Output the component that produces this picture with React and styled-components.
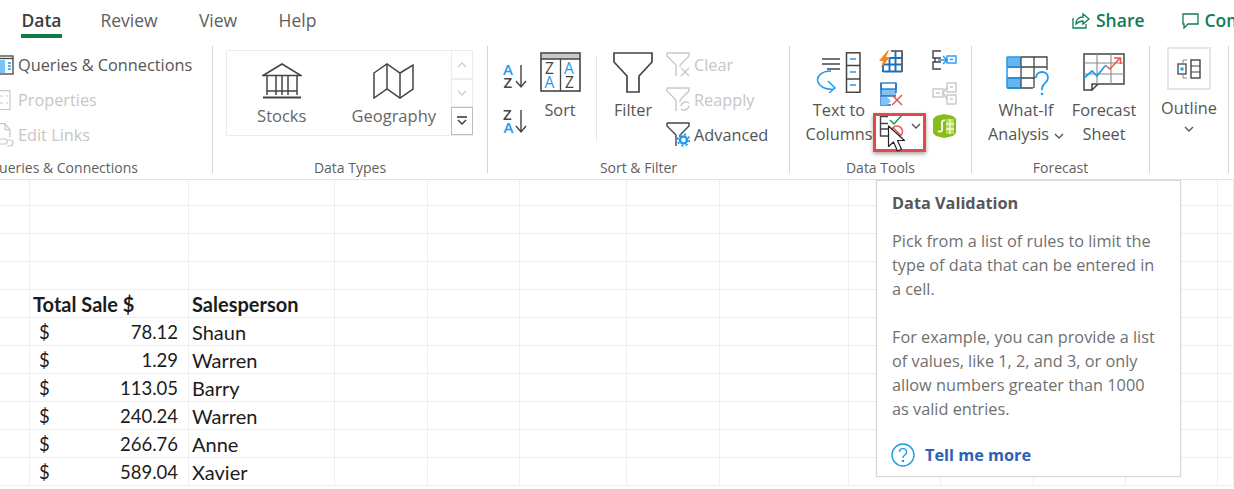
import React from "react";
import styled, { createGlobalStyle } from "styled-components";

const Global = createGlobalStyle`
  html, body { margin: 0; padding: 0; background: #fff; }
  body { font-family: "Open Sans", "Noto Sans", sans-serif; color: #555; }
  * { box-sizing: border-box; }
`;

const Page = styled.div`
  position: relative;
  width: 1234px;
  height: 489px;
  overflow: hidden;
  background: #fff;
`;

const TabBar = styled.div`
  display: flex;
  align-items: flex-start;
  height: 46px;
  padding-left: 21px;
`;

const Tab = styled.div`
  height: 38px;
  width: ${(p) => p.$w}px;
  margin-right: ${(p) => p.$gap}px;
  padding-top: 8px;
  font-size: 17.5px;
  line-height: 24px;
  text-align: center;
  white-space: nowrap;
  color: ${(p) => (p.$active ? "#3d3d3d" : "#5e5e5e")};
  font-weight: ${(p) => (p.$active ? 600 : 400)};
  border-bottom: ${(p) => (p.$active ? "4px solid #107c41" : "none")};
`;

const TabActions = styled.div`
  display: flex;
  margin-left: auto;
  width: 162px;
  height: 40px;
  padding-top: 8px;
  overflow: hidden;
`;

const TabAction = styled.div`
  display: flex;
  align-items: center;
  gap: 6px;
  flex: none;
  height: 24px;
  margin-right: 37px;
  font-size: 17.5px;
  font-weight: 600;
  color: #0f7b5a;
  white-space: nowrap;
`;

const Ribbon = styled.div`
  display: flex;
  height: 134px;
  border-bottom: 1px solid #e4e4e4;
`;

const Group = styled.div`
  display: flex;
  flex-direction: column;
  flex: none;
  width: ${(p) => p.$w}px;
  height: 127px;
  border-right: 1px solid #d4d4d4;
`;

const GroupBody = styled.div`
  display: flex;
  flex: none;
  height: 111px;
  padding-left: ${(p) => p.$pad || 0}px;
`;

const GroupLabel = styled.div`
  display: flex;
  justify-content: ${(p) => (p.$end ? "flex-end" : "center")};
  height: 16px;
  padding-right: ${(p) => p.$right || 0}px;
  font-size: 14px;
  line-height: 22px;
  white-space: nowrap;
  color: #5f5f5f;
`;

const RowStack = styled.div`
  display: flex;
  flex-direction: column;
  margin-left: ${(p) => p.$ml || 0}px;
  padding-top: 1px;
`;

const SmallRow = styled.div`
  display: flex;
  align-items: center;
  gap: 4px;
  height: 35px;
  font-size: 16.3px;
  white-space: nowrap;
  color: ${(p) => (p.$off ? "#c6c6c6" : "#555")};
`;

const RowIcon = styled.div`
  display: flex;
  flex: none;
  width: ${(p) => p.$w}px;
`;

const Gallery = styled.div`
  display: flex;
  width: 247px;
  height: 86px;
  margin: 4px 0 0 0;
  border: 1px solid #ececec;
`;

const GalleryItem = styled.div`
  display: flex;
  flex-direction: column;
  align-items: center;
  width: ${(p) => p.$w}px;
  padding-top: 12px;
  font-size: 16.5px;
  color: #666;
`;

const GalleryLabel = styled.div`
  margin-top: 5px;
  line-height: 24px;
`;

const GalleryScroll = styled.div`
  display: flex;
  flex-direction: column;
  flex: none;
  width: 22px;
  margin-left: auto;
  margin-top: -1px;
  margin-right: -1px;
`;

const ScrollButton = styled.div`
  display: flex;
  align-items: center;
  justify-content: center;
  height: ${(p) => p.$h}px;
  border: 1px solid ${(p) => (p.$on ? "#bdbdbd" : "#ececec")};
`;

const BigButton = styled.div`
  display: flex;
  flex-direction: column;
  align-items: center;
  flex: none;
  width: ${(p) => p.$w}px;
  margin-left: ${(p) => p.$ml || 0}px;
  padding-top: 6px;
  font-size: 16.3px;
  line-height: 24px;
  text-align: center;
  white-space: nowrap;
  color: #555;
`;

const BigIcon = styled.div`
  display: flex;
  align-items: center;
  justify-content: center;
  height: 40px;
  margin-bottom: 6px;
`;

const SortPair = styled.div`
  display: flex;
  flex-direction: column;
  flex: none;
  gap: 20px;
  width: 24px;
  padding-top: 18px;
`;

const VRule = styled.div`
  flex: none;
  width: 1px;
  height: 86px;
  margin: 9px 0 0 11px;
  background: #e4e4e4;
`;

const ToolColumn = styled.div`
  display: flex;
  flex-direction: column;
  flex: none;
  width: ${(p) => p.$w}px;
  padding: 4px 0 0 ${(p) => p.$pad || 0}px;
`;

const ToolCell = styled.div`
  position: relative;
  display: flex;
  align-items: flex-start;
  height: 32px;
`;

const RedBox = styled.div`
  position: absolute;
  left: -6px;
  top: -1px;
  width: 53px;
  height: 39px;
  border: 3px solid #e9464c;
  box-shadow: 0 2px 4px rgba(0, 0, 0, 0.35);
`;

const Pointer = styled.div`
  position: absolute;
  left: 8px;
  top: 11px;
  display: flex;
`;

const OutlineBox = styled.div`
  display: flex;
  align-items: center;
  justify-content: center;
  width: 44px;
  height: 43px;
  margin: 1px 0 6px 0;
  border: 2px solid #e6e6e6;
`;

const OutlineButton = styled.div`
  display: flex;
  flex-direction: column;
  align-items: center;
  width: 78px;
  font-size: 16.3px;
  line-height: 24px;
  color: #555;
`;

const Chevron = styled.span`
  display: inline-flex;
  margin-left: ${(p) => p.$ml || 0}px;
  margin-top: ${(p) => p.$mt || 0}px;
  vertical-align: middle;
`;

const Sheet = styled.div`
  display: grid;
  grid-template-columns: 30px 159px 146px 93px 92px 107px 93px 129px 92px 93px 92px 92px 16px;
  grid-auto-rows: 28px;
  grid-template-rows: 26px;
  font-family: "Lato", "Open Sans", sans-serif;
  font-size: 20px;
  color: #1c1c1c;
`;

const Cell = styled.div`
  display: flex;
  align-items: center;
  justify-content: ${(p) => (p.$money ? "space-between" : "flex-start")};
  padding: ${(p) => (p.$money ? "0 10px 0 9px" : "0 0 0 3px")};
  border-right: 1px solid #eeeeee;
  border-bottom: 1px solid #eeeeee;
  font-weight: ${(p) => (p.$bold ? 700 : 400)};
  white-space: nowrap;
`;

const Amount = styled.span`
  font-size: 18.500px;
`;

const Tooltip = styled.div`
  position: absolute;
  left: 876px;
  top: 180px;
  width: 305px;
  height: 297px;
  padding: 10px 15px 0 15px;
  background: #fff;
  border: 1px solid #d6d6d6;
  box-shadow: 0 0 2px rgba(0, 0, 0, 0.08);
  color: #707070;
`;

const TipTitle = styled.div`
  font-size: 16.300px;
  font-weight: 700;
  line-height: 24px;
  white-space: nowrap;
  color: #575757;
`;

const TipText = styled.p`
  margin: ${(p) => p.$mt}px 0 0 0;
  font-size: 16.300px;
  line-height: 24px;
  white-space: nowrap;
`;

const TipLink = styled.div`
  display: flex;
  align-items: center;
  gap: 10px;
  margin-top: 22px;
  margin-left: -1px;
  font-size: 16.300px;
  font-weight: 700;
  color: #2b62b8;
`;

const DARK = "#444";
const BLUE = "#1e9bf0";
const OFF = "#c8c8c8";

const ChevronIcon = ({ color = "#555", size = 10 }) => (
  <svg width={size} height={size * 0.6} viewBox="0 0 10 6" fill="none" stroke={color} strokeWidth="1.4">
    <path d="M1 1l4 4 4-4" />
  </svg>
);

const ShareIcon = () => (
  <svg width="18" height="18" viewBox="0 0 18 18" fill="none" stroke="#0f7b5a" strokeWidth="1.3">
    <path d="M1 7v10h13v-4" />
    <path d="M4 13c0-5 3-7 7-7V3l6 5-6 5v-3c-3 0-5 1-7 3z" />
  </svg>
);

const CommentIcon = () => (
  <svg width="17" height="17" viewBox="0 0 17 17" fill="none" stroke="#0f7b5a" strokeWidth="1.3">
    <path d="M1 2h15v10H6l-4 4v-4H1z" />
  </svg>
);

const QueriesIcon = () => (
  <svg width="14" height="20" viewBox="0 0 14 20" fill="none">
    <rect x="-4" y="1" width="17" height="18" stroke={DARK} strokeWidth="1.3" />
    <path d="M-4 3.5h17" stroke={DARK} strokeWidth="1.3" />
    <rect x="0" y="5" width="5" height="13" fill="#79c4f5" />
    <path d="M8 8h3M8 11h3M8 14h3" stroke={BLUE} strokeWidth="1.3" />
  </svg>
);

const PropertiesIcon = () => (
  <svg width="12" height="20" viewBox="0 0 12 20" fill="none" stroke={OFF} strokeWidth="1.2">
    <path d="M0 .6h10v19H0" />
    <path d="M0 6h3M0 13h3M6 6h2M6 13h2" />
  </svg>
);

const EditLinksIcon = () => (
  <svg width="14" height="24" viewBox="0 0 14 24" fill="none" stroke={OFF} strokeWidth="1.2">
    <path d="M0 .6h5l5 6v8M5 .6v6h5" />
    <path d="M0 16h5c3 0 3 5 0 5H0M7 23h3c4 0 4-6 0-6H7" />
  </svg>
);

const StocksIcon = () => (
  <svg width="40" height="36" viewBox="0 0 40 36" fill="none" stroke={DARK} strokeWidth="1.5">
    <path d="M1 12.5L20 1l19 11.500z" />
    <path d="M5 13v19M35 13v19M14 13v19M20 13v19M26 13v19M5 28h30" />
    <path d="M1 34.500h38" strokeWidth="2.200" />
  </svg>
);

const MapIcon = () => (
  <svg width="41" height="36" viewBox="0 0 41 36" fill="none" stroke={DARK} strokeWidth="1.5">
    <path d="M1 10L14 1l13 9 13-8v24l-13 9-13-9-13 9z" />
    <path d="M14 1v25M27 10v25" />
  </svg>
);

const SortSmall = ({ top, bottom }) => (
  <svg width="24" height="25" viewBox="0 0 24 25" fill="none" fontFamily="Open Sans, sans-serif" fontSize="15" fontWeight="600" overflow="visible">
    <text x="0" y="11" fill={top === "A" ? BLUE : DARK}>{top}</text>
    <text x="0.500" y="24" fill={bottom === "A" ? BLUE : DARK}>{bottom}</text>
    <path d="M18 1v22M13 17l5 6 5-6" stroke={DARK} strokeWidth="1.400" />
  </svg>
);

const SortBigIcon = () => (
  <svg width="41" height="40" viewBox="0 0 41 40" fill="none" fontFamily="Open Sans, sans-serif" fontSize="15.500">
    <rect x="1" y="1" width="39" height="38" stroke={DARK} strokeWidth="1.600" />
    <rect x="2" y="2" width="37" height="5" fill="#c9c9c9" />
    <path d="M1 7h39M20.500 7v32" stroke={DARK} strokeWidth="1.300" />
    <text x="5" y="22" fill={DARK}>Z</text>
    <text x="4.500" y="36" fill={BLUE}>A</text>
    <text x="24" y="22" fill={BLUE}>A</text>
    <text x="25" y="36" fill={DARK}>Z</text>
  </svg>
);

const FilterIcon = () => (
  <svg width="40" height="41" viewBox="0 0 40 41" fill="none" stroke={DARK} strokeWidth="1.700">
    <path d="M1 1h38v9L26 24v16H14V24L1 10z" />
  </svg>
);

const FunnelSmall = ({ color, children }) => (
  <svg width="24" height="25" viewBox="0 0 24 25" fill="none" stroke={color} strokeWidth="1.400">
    <path d="M1 1h22v3l-9 9M10 13L1 4V1M10 13v11M14 13v2" />
    {children}
  </svg>
);

const TextColumnsIcon = () => (
  <svg width="46" height="41" viewBox="0 0 46 41" fill="none">
    <path d="M6 7h18M6 12h18M11 17h13" stroke={DARK} strokeWidth="1.300" />
    <rect x="30.500" y="0.800" width="13.500" height="39.500" stroke={DARK} strokeWidth="1.500" />
    <path d="M30.500 13.500h13.500M30.500 27h13.500" stroke={DARK} strokeWidth="1.300" />
    <path d="M34 7h6M34 20h6M34 33h6" stroke={BLUE} strokeWidth="1.500" />
    <path d="M15 19C5 19 0 25 2 30c2 5 8 8 16 7M12 29l7 7-6 5" stroke={BLUE} strokeWidth="1.500" />
  </svg>
);

const FlashFillIcon = () => (
  <svg width="24" height="23" viewBox="0 0 24 23" fill="none">
    <path d="M12 1h11v21" stroke={DARK} strokeWidth="1.600" />
    <path d="M4 14.500h19M4 21.500h19M4 14v8M10.500 8v14M16.500 1v21M10.500 8h13" stroke="#1b6fc2" strokeWidth="1.900" />
    <path d="M9 0L0 11h4l-2 7 9-11H7l3-7z" fill="#f5871f" />
  </svg>
);

const RemoveDupIcon = () => (
  <svg width="24" height="25" viewBox="0 0 24 25" fill="none">
    <rect x="2" y="7" width="15" height="7" fill="#7cc4f5" />
    <rect x="2" y="1" width="15" height="6" fill="#fff" stroke="#1b6fc2" strokeWidth="1.300" />
    <path d="M2 1v22h10M17 1v10M2 14h15" stroke="#1b6fc2" strokeWidth="1.400" />
    <path d="M2 15h6l4 4-4 4H2z" fill="#7cc4f5" />
    <path d="M13 13l10 10M23 13L13 23" stroke="#e8574f" strokeWidth="1.500" />
  </svg>
);

const ValidationIcon = () => (
  <svg width="25" height="24" viewBox="0 0 25 24" fill="none">
    <path d="M9 2.500H1.500v7H9M9 15H1.500v7H9" stroke={DARK} strokeWidth="1.400" />
    <path d="M1.500 9.500v5.500" stroke={DARK} strokeWidth="1.400" />
    <path d="M11 6l4 4 8-9" stroke="#1f9d55" strokeWidth="1.500" />
    <circle cx="18" cy="17.500" r="5.500" stroke="#e8574f" strokeWidth="1.500" />
    <path d="M14 13.500l8 8" stroke="#e8574f" strokeWidth="1.500" />
  </svg>
);

const PointerIcon = () => (
  <svg width="20" height="28" viewBox="0 0 20 28" fill="none">
    <path d="M1.500 1v20.500l5-4.500 4 9 4-1.800-4-8.700h7z" fill="#fff" stroke="#222" strokeWidth="1.200" strokeLinejoin="round" />
  </svg>
);

const RelationIcon = () => (
  <svg width="25" height="20" viewBox="0 0 25 20" fill="none">
    <path d="M9 1H1v7h8M9 12H1v7h8M3 8v4" stroke={DARK} strokeWidth="1.400" />
    <path d="M6 10h9M11 6l4 4-4 4" stroke={BLUE} strokeWidth="1.500" />
    <rect x="15" y="6" width="9" height="7" stroke={BLUE} strokeWidth="1.400" />
    <path d="M18 9.500h3" stroke={BLUE} strokeWidth="1.400" />
  </svg>
);

const HierarchyIcon = () => (
  <svg width="25" height="23" viewBox="0 0 25 23" fill="none" stroke={OFF} strokeWidth="1.400">
    <rect x="1" y="7" width="10" height="8" />
    <rect x="15" y="1" width="9" height="9" />
    <rect x="15" y="13" width="9" height="9" />
    <path d="M11 11l4-6M11 11l4 6M18 5h3M18 17h3M4 11h4" />
  </svg>
);

const DataModelIcon = () => (
  <svg width="25" height="24" viewBox="0 0 25 24" fill="none">
    <path d="M1 5l3-3 8-2 9 2 3 3v14l-3 3-9 2-8-2-3-3z" fill="#86bd1c" />
    <path d="M14 5h8v15h-8z" fill="#b8dc5c" />
    <path d="M14 10h8M14 15h8M18 5v15" stroke="#f2f8dc" strokeWidth="1.300" />
    <path d="M10 7v9c0 2-3 2-4 1M10 7l3-1" stroke="#fff" strokeWidth="1.700" />
  </svg>
);

const WhatIfIcon = () => (
  <svg width="46" height="40" viewBox="0 0 46 40" fill="none" overflow="visible">
    <rect x="4" y="5" width="14" height="10" fill="#62b6f2" />
    <rect x="4" y="26" width="14" height="10" fill="#62b6f2" />
    <path d="M18 5h26v13M4 15h40M4 26h28M4 36h26M18 5v31M31 5v31" stroke={DARK} strokeWidth="1.300" />
    <path d="M4 5v31M4 5h14M4 15h14M4 26h14M4 36h14" stroke={BLUE} strokeWidth="1.500" />
    <path d="M33 26c0-8 12-8 12 0 0 5-6 5-6 11v1" stroke={BLUE} strokeWidth="1.800" />
    <circle cx="39" cy="42" r="1.300" fill={BLUE} />
  </svg>
);

const ForecastIcon = () => (
  <svg width="42" height="38" viewBox="0 0 42 38" fill="none">
    <path d="M9 37H1V1h40v30H15l-6 6v-6h6" stroke={DARK} strokeWidth="1.500" />
    <path d="M1 10h40M1 21h40M14 1v30M28 1v30" stroke="#8a8a8a" strokeWidth="1.100" />
    <path d="M1 25l8-7 5 5 8-10" stroke={BLUE} strokeWidth="1.700" />
    <path d="M22 12l5 4 10-11M31 5h6.500v6" stroke="#e8574f" strokeWidth="1.600" />
  </svg>
);

const OutlineIcon = () => (
  <svg width="24" height="20" viewBox="0 0 24 20" fill="none">
    <path d="M6 1h4M6 19h4M6 1v3M6 16v3" stroke="#8a8a8a" strokeWidth="1" />
    <rect x="1" y="5" width="8" height="10" stroke={DARK} strokeWidth="1.300" />
    <rect x="3.500" y="8.500" width="3" height="3" fill={BLUE} />
    <rect x="14" y="1" width="9" height="18" stroke={DARK} strokeWidth="1.400" />
    <path d="M14 7h9M14 13h9" stroke={DARK} strokeWidth="1.200" />
  </svg>
);

const HelpIcon = () => (
  <svg width="24" height="24" viewBox="0 0 24 24" fill="none" stroke="#1e9be8" strokeWidth="1.400">
    <circle cx="12" cy="12" r="11" />
    <path d="M8.500 9c0-4.500 7-4.500 7 0 0 3-3.500 3-3.500 6" />
    <circle cx="12" cy="18" r=".6" fill="#1e9be8" />
  </svg>
);

const records = [
  ["78.12", "Shaun"],
  ["1.29", "Warren"],
  ["113.05", "Barry"],
  ["240.24", "Warren"],
  ["266.76", "Anne"],
  ["589.04", "Xavier"],
];

const COLUMN_COUNT = 13;
const ROW_COUNT = 11;

const SheetGrid = () => {
  const cells = [];
  for (let r = 0; r < ROW_COUNT; r++) {
    for (let c = 0; c < COLUMN_COUNT; c++) {
      const key = `${r}-${c}`;
      const rec = records[r - 5];
      if (r === 4 && c === 1) cells.push(<Cell key={key} $bold>Total Sale $</Cell>);
      else if (r === 4 && c === 2) cells.push(<Cell key={key} $bold>Salesperson</Cell>);
      else if (rec && c === 1) cells.push(<Cell key={key} $money><Amount>$</Amount><Amount>{rec[0]}</Amount></Cell>);
      else if (rec && c === 2) cells.push(<Cell key={key}>{rec[1]}</Cell>);
      else cells.push(<Cell key={key} />);
    }
  }
  return <Sheet>{cells}</Sheet>;
};

export default function App() {
  return (
    <Page>
      <Global />
      <TabBar>
        <Tab $w={41} $gap={38} $active>Data</Tab>
        <Tab $w={58} $gap={40}>Review</Tab>
        <Tab $w={40} $gap={40}>View</Tab>
        <Tab $w={39} $gap={0}>Help</Tab>
        <TabActions>
          <TabAction><ShareIcon />Share</TabAction>
          <TabAction><CommentIcon />Comments</TabAction>
        </TabActions>
      </TabBar>

      <Ribbon>
        <Group $w={213}>
          <GroupBody>
            <RowStack>
              <SmallRow><RowIcon $w={14}><QueriesIcon /></RowIcon>Queries &amp; Connections</SmallRow>
              <SmallRow $off><RowIcon $w={14}><PropertiesIcon /></RowIcon>Properties</SmallRow>
              <SmallRow $off><RowIcon $w={14}><EditLinksIcon /></RowIcon>Edit Links</SmallRow>
            </RowStack>
          </GroupBody>
          <GroupLabel $end $right={74}>Queries &amp; Connections</GroupLabel>
        </Group>

        <Group $w={275}>
          <GroupBody $pad={13}>
            <Gallery>
              <GalleryItem $w={110}>
                <StocksIcon />
                <GalleryLabel>Stocks</GalleryLabel>
              </GalleryItem>
              <GalleryItem $w={115}>
                <MapIcon />
                <GalleryLabel>Geography</GalleryLabel>
              </GalleryItem>
              <GalleryScroll>
                <ScrollButton $h={30}>
                  <svg width="10" height="6" viewBox="0 0 10 6" fill="none" stroke="#cfcfcf" strokeWidth="1.300"><path d="M1 5l4-4 4 4" /></svg>
                </ScrollButton>
                <ScrollButton $h={28}><ChevronIcon color="#cfcfcf" /></ScrollButton>
                <ScrollButton $h={29} $on>
                  <svg width="12" height="10" viewBox="0 0 12 10" fill="none" stroke="#333" strokeWidth="1.300"><path d="M1 1h10M2 4l4 4 4-4" /></svg>
                </ScrollButton>
              </GalleryScroll>
            </Gallery>
          </GroupBody>
          <GroupLabel>Data Types</GroupLabel>
        </Group>

        <Group $w={302}>
          <GroupBody $pad={15}>
            <SortPair>
              <SortSmall top="A" bottom="Z" />
              <SortSmall top="Z" bottom="A" />
            </SortPair>
            <BigButton $w={50} $ml={8}>
              <BigIcon><SortBigIcon /></BigIcon>
              Sort
            </BigButton>
            <VRule />
            <BigButton $w={60} $ml={6}>
              <BigIcon><FilterIcon /></BigIcon>
              Filter
            </BigButton>
            <RowStack $ml={3}>
              <SmallRow $off>
                <RowIcon $w={24}>
                  <FunnelSmall color={OFF}><path d="M15 16l8 8M23 16l-8 8" /></FunnelSmall>
                </RowIcon>
                Clear
              </SmallRow>
              <SmallRow $off>
                <RowIcon $w={24}>
                  <FunnelSmall color={OFF}><path d="M15 19a5 5 0 0 1 8-3M23 19a5 5 0 0 1-8 3" /></FunnelSmall>
                </RowIcon>
                Reapply
              </SmallRow>
              <SmallRow>
                <RowIcon $w={24}>
                  <FunnelSmall color={DARK}>
                    <circle cx="17.500" cy="18" r="3.500" stroke={BLUE} strokeWidth="2.500" />
                    <circle cx="17.500" cy="18" r="5.800" stroke={BLUE} strokeWidth="1.800" strokeDasharray="2 2.550" />
                  </FunnelSmall>
                </RowIcon>
                Advanced
              </SmallRow>
            </RowStack>
          </GroupBody>
          <GroupLabel>Sort &amp; Filter</GroupLabel>
        </Group>

        <Group $w={182}>
          <GroupBody $pad={15}>
            <BigButton $w={68}>
              <BigIcon><TextColumnsIcon /></BigIcon>
              Text to
              <br />
              Columns
            </BigButton>
            <ToolColumn $w={59} $pad={6}>
              <ToolCell><FlashFillIcon /></ToolCell>
              <ToolCell><RemoveDupIcon /></ToolCell>
              <ToolCell>
                <ValidationIcon />
                <Chevron $ml={7} $mt={9}><ChevronIcon /></Chevron>
                <RedBox />
                <Pointer><PointerIcon /></Pointer>
              </ToolCell>
            </ToolColumn>
            <ToolColumn $w={30}>
              <ToolCell><RelationIcon /></ToolCell>
              <ToolCell><HierarchyIcon /></ToolCell>
              <ToolCell><DataModelIcon /></ToolCell>
            </ToolColumn>
          </GroupBody>
          <GroupLabel>Data Tools</GroupLabel>
        </Group>

        <Group $w={178}>
          <GroupBody $pad={9}>
            <BigButton $w={90}>
              <BigIcon><WhatIfIcon /></BigIcon>
              What-If
              <br />
              <span>Analysis<Chevron $ml={5}><ChevronIcon /></Chevron></span>
            </BigButton>
            <BigButton $w={66}>
              <BigIcon><ForecastIcon /></BigIcon>
              Forecast
              <br />
              Sheet
            </BigButton>
          </GroupBody>
          <GroupLabel>Forecast</GroupLabel>
        </Group>

        <Group $w={79}>
          <GroupBody>
            <OutlineButton>
              <OutlineBox><OutlineIcon /></OutlineBox>
              Outline
              <Chevron $mt={6}><ChevronIcon /></Chevron>
            </OutlineButton>
          </GroupBody>
        </Group>
      </Ribbon>

      <SheetGrid />

      <Tooltip>
        <TipTitle>Data Validation</TipTitle>
        <TipText $mt={14}>
          Pick from a list of rules to limit the
          <br />type of data that can be entered in
          <br />a cell.
        </TipText>
        <TipText $mt={24}>
          For example, you can provide a list
          <br />of values, like 1, 2, and 3, or only
          <br />allow numbers greater than 1000
          <br />as valid entries.
        </TipText>
        <TipLink><HelpIcon />Tell me more</TipLink>
      </Tooltip>
    </Page>
  );
}
